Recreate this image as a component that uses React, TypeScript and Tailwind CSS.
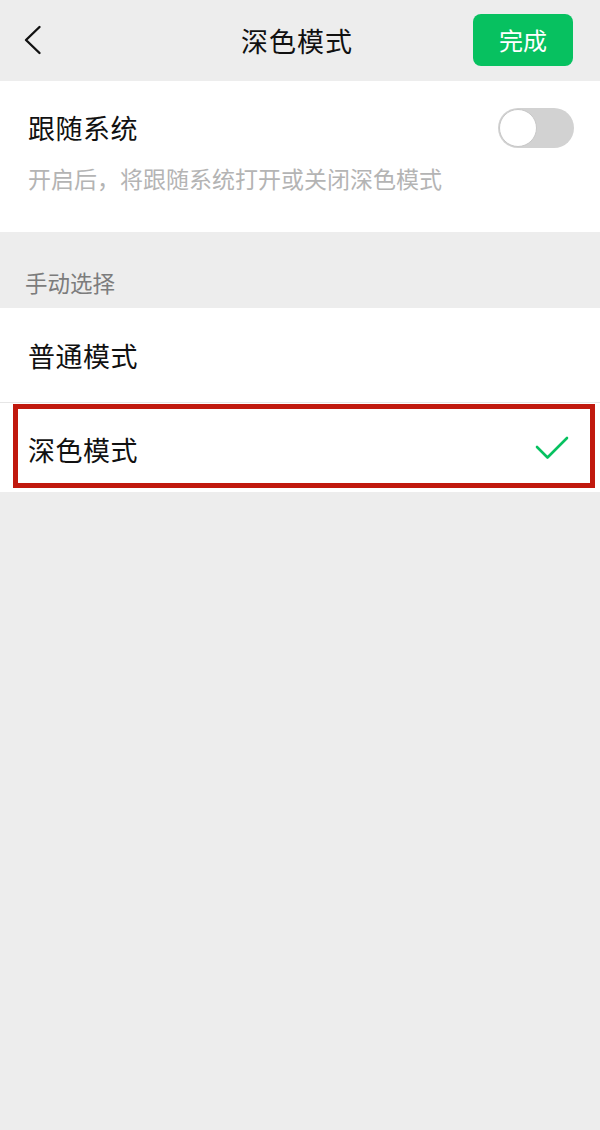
import React from 'react'

const font = { fontFamily: '"Noto Sans CJK SC", "Noto Sans", sans-serif' }

function Toggle() {
  return (
    <div className="w-[76px] h-[40px] rounded-full bg-[#d2d2d2] flex items-center pl-[1px]">
      <div className="w-[38px] h-[38px] rounded-full bg-white border-[1.5px] border-[#c8c8c8]" />
    </div>
  )
}

function Check() {
  return (
    <svg width="34" height="24" viewBox="0 0 34 24" fill="none">
      <path d="M2 11 L12.5 21.5 L32 2" stroke="#07c160" strokeWidth="2.6" strokeLinecap="round" strokeLinejoin="round" />
    </svg>
  )
}

export default function App() {
  return (
    <div className="min-h-[1130px] w-[600px] bg-[#ededed] text-[#111]" style={font}>
      <header className="h-[81px] flex items-center justify-between pl-[24px] pr-[27px] relative">
        <svg width="18" height="30" viewBox="0 0 18 30" fill="none" className="mt-[-1px]">
          <path d="M15.5 2 L2 15 L15.5 28" stroke="#111" strokeWidth="2.4" strokeLinecap="round" strokeLinejoin="round" />
        </svg>
        <h1 className="absolute left-0 right-[6px] text-center text-[27px] leading-none pointer-events-none tracking-[1px]">深色模式</h1>
        <button className="w-[100px] h-[52px] mt-[-1px] rounded-[8px] bg-[#07c160] text-white text-[24px] leading-none">完成</button>
      </header>

      <section className="bg-white h-[151px] pl-[28px] pr-[26px] pt-[27px]">
        <div className="flex items-center justify-between">
          <span className="text-[27px] leading-[40px] tracking-[0.5px]">跟随系统</span>
          <Toggle />
        </div>
        <p className="text-[23px] leading-none text-[#b4b4b4] mt-[19px]">开启后，将跟随系统打开或关闭深色模式</p>
      </section>

      <div className="h-[76px] flex items-end pl-[25px] pb-[15px]">
        <span className="text-[22.5px] leading-none text-[#7c7c7c]">手动选择</span>
      </div>

      <div className="bg-white">
        <div className="h-[95px] flex items-center pl-[28px] border-b border-[#e6e6e6]">
          <span className="text-[27px] leading-none tracking-[0.5px]">普通模式</span>
        </div>
        <div className="h-[89px] flex items-center justify-between pl-[28px] pr-[31px] relative">
          <span className="text-[27px] leading-none tracking-[0.5px] mt-[4px]">深色模式</span>
          <Check />
          <div className="absolute left-[13px] right-[5px] top-[1px] bottom-[4px] border-[5px] border-[#c1190e]" />
        </div>
      </div>
    </div>
  )
}
